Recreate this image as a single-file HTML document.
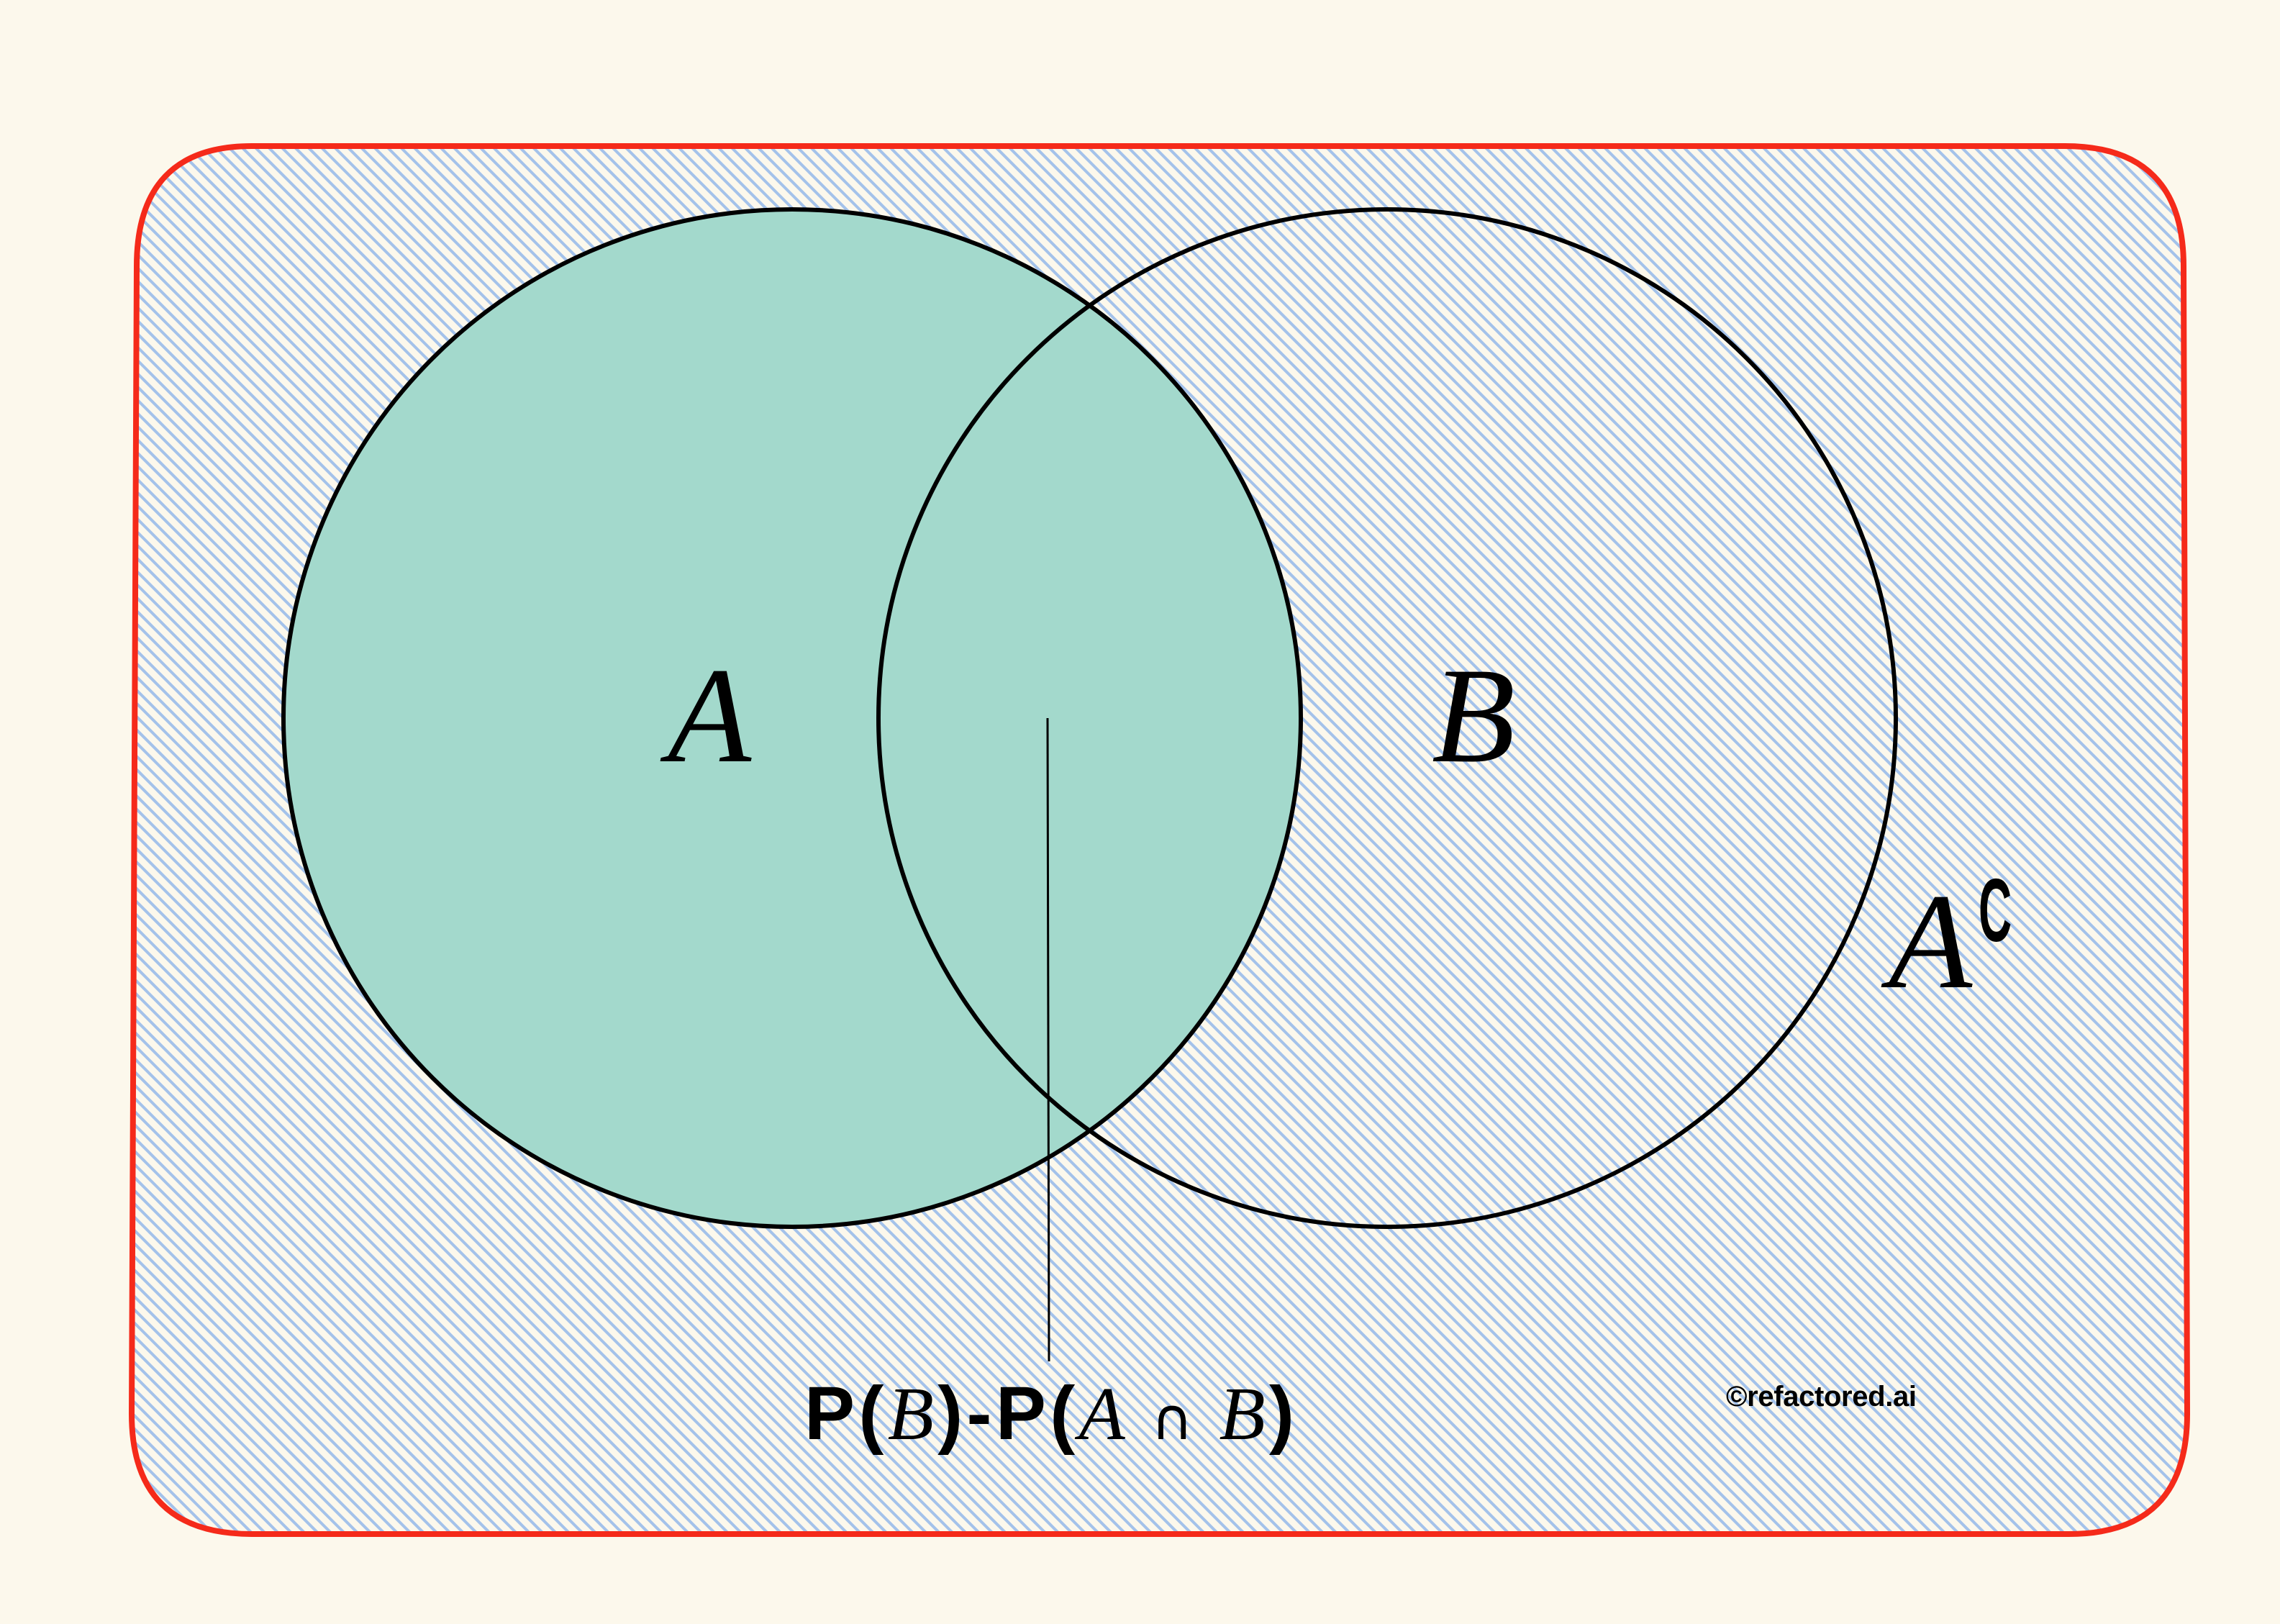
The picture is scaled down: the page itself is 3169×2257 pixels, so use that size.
<!DOCTYPE html>
<html><head><meta charset="utf-8"><style>
html,body{margin:0;padding:0;background:#fcf8ec;}
svg{display:block;}
</style></head><body>
<svg width="3169" height="2257" viewBox="0 0 3169 2257" xmlns="http://www.w3.org/2000/svg">
<defs>
<pattern id="h" width="13" height="13" patternUnits="userSpaceOnUse" patternTransform="rotate(-45)">
<rect width="13" height="13" fill="#fcf8ec"/>
<rect x="0" y="0" width="4" height="13" fill="#a4c2ea"/>
</pattern>
</defs>
<rect width="3169" height="2257" fill="#fcf8ec"/>
<path d="M350 203 L2870 203 Q3035 203 3035 370 L3040 1965 Q3040 2132 2875 2132 L350 2132 Q183 2132 183 1965 L190 370 Q190 203 350 203 Z" fill="url(#h)" stroke="#f52a1a" stroke-width="8"/>
<circle cx="1101" cy="998" r="707" fill="#a3d9cc" stroke="#000" stroke-width="6"/>
<circle cx="1928" cy="998" r="707" fill="none" stroke="#000" stroke-width="6"/>
<line x1="1456" y1="998" x2="1458" y2="1892" stroke="#000" stroke-width="3"/>
<g font-family="Liberation Serif, serif" font-style="italic" fill="#000">
<text x="928" y="1058" font-size="190">A</text>
<text x="1990" y="1058" font-size="190">B</text>
<text x="2625" y="1372" font-size="190">A</text>
</g>
<text transform="translate(2750,1308) scale(0.8,1.55)" font-family="Liberation Sans, sans-serif" font-weight="bold" font-size="80" fill="#000">C</text>
<text x="1118" y="2000" font-family="Liberation Sans, sans-serif" font-weight="bold" font-size="105" fill="#000" textLength="681" lengthAdjust="spacing">P(<tspan font-family="Liberation Serif, serif" font-style="italic" font-weight="normal">B</tspan>)-P(<tspan font-family="Liberation Serif, serif" font-style="italic" font-weight="normal">A</tspan><tspan font-family="DejaVu Sans, sans-serif" font-weight="normal" font-size="80"> ∩ </tspan><tspan font-family="Liberation Serif, serif" font-style="italic" font-weight="normal">B</tspan>)</text>
<text x="2399" y="1954" font-family="Liberation Sans, sans-serif" font-weight="bold" font-size="40" fill="#000" textLength="265">©refactored.ai</text>
</svg>
</body></html>
